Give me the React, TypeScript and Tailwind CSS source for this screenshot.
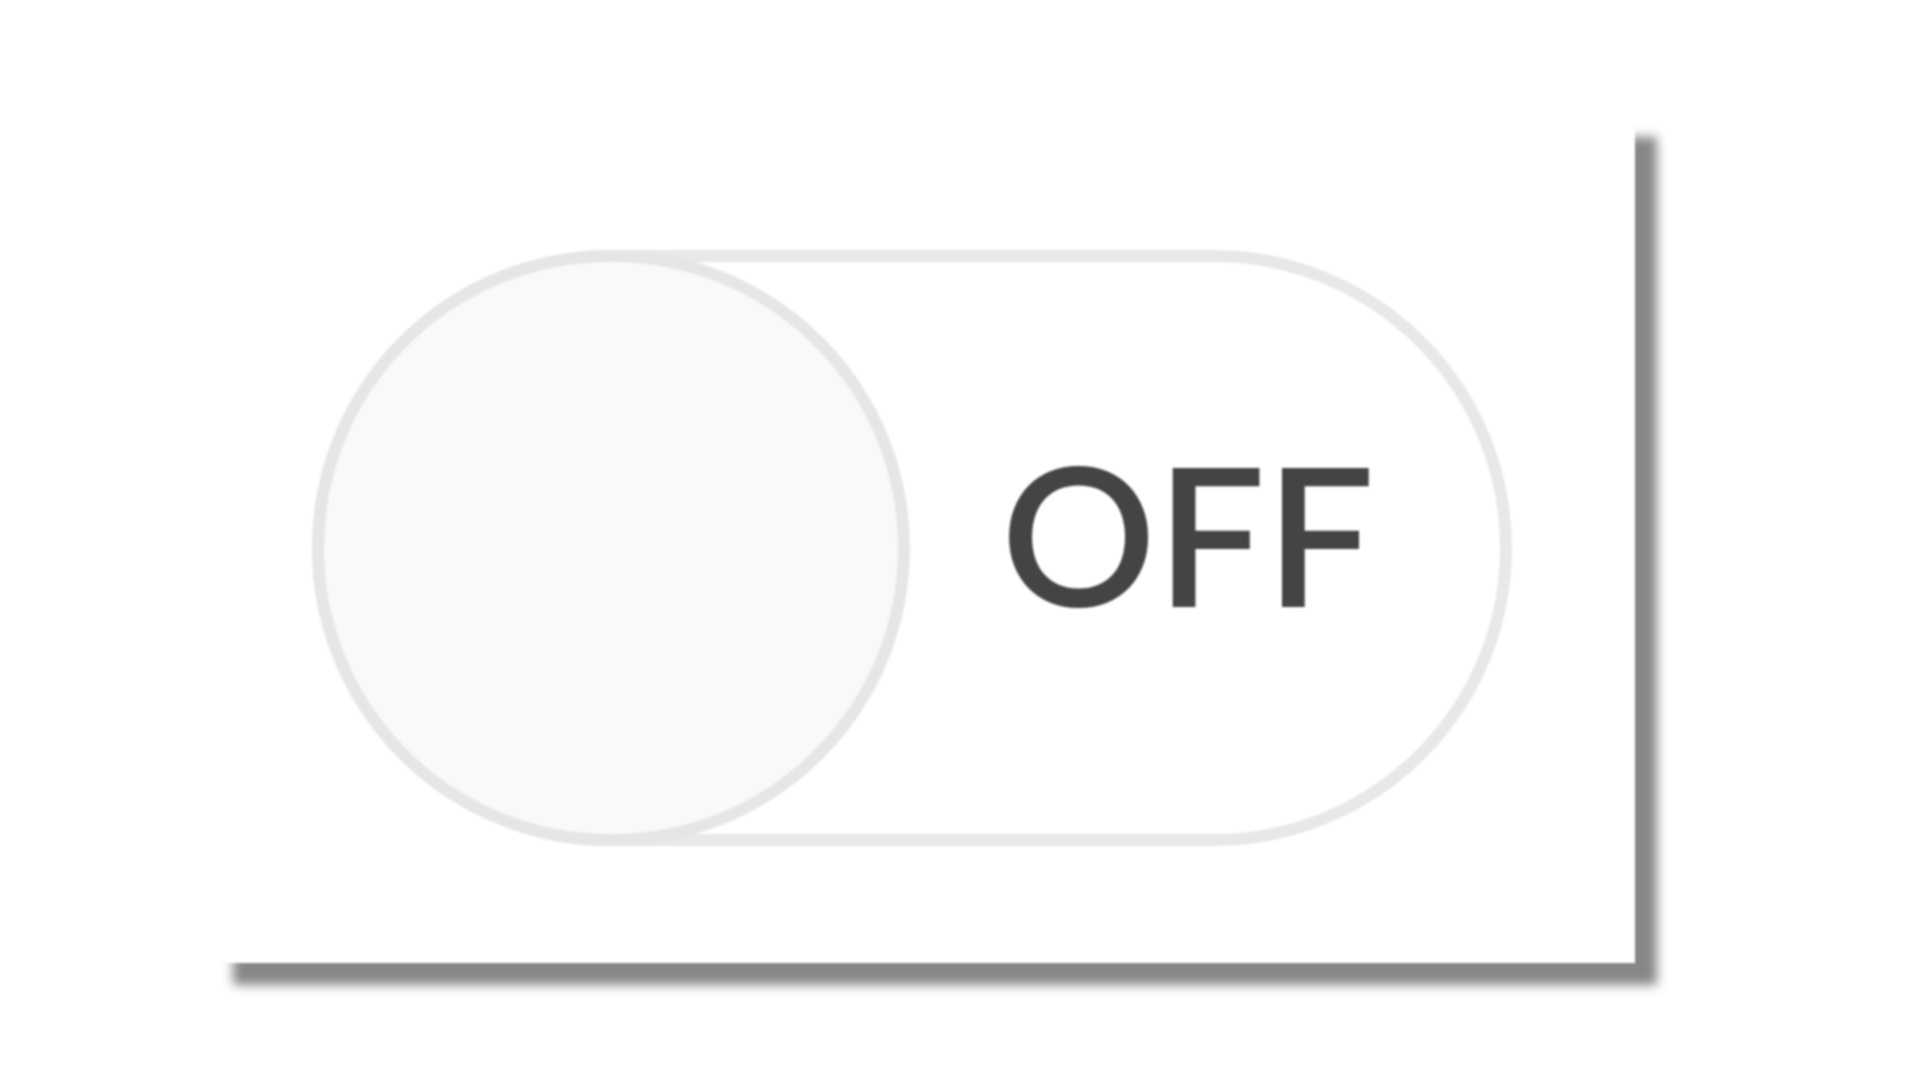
export default function App() {
  return (
    <div className="min-h-screen w-full bg-white pl-[211px] pt-[115px]">
      <div className="flex h-[848px] w-[1424px] items-start bg-white pl-[101px] pt-[135px] shadow-[22px_22px_10px_#878787] blur-[1px]">
        <div className="relative flex h-[596px] w-[1200px] items-center rounded-full border-[12px] border-[#e8e8e8] bg-white">
          <div className="absolute -left-[12px] -top-[12px] h-[596px] w-[598px] rounded-full border-[12px] border-[#e6e6e6] bg-[#f9f9f9]" />
          <span className="mb-[32px] ml-[677px] font-['Lato','Noto_Sans',sans-serif] text-[193px] font-semibold leading-none text-[#444444]">
            OFF
          </span>
        </div>
      </div>
    </div>
  );
}
